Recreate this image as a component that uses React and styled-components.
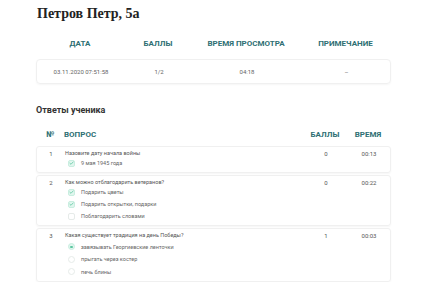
import React from "react";
import styled, { createGlobalStyle } from "styled-components";

const Global = createGlobalStyle`
  body {
    margin: 0;
    background: #fff;
    font-family: Roboto, "Noto Sans", sans-serif;
  }
`;

const Page = styled.div`
  width: 355px;
  padding: 6px 0 0 36px;
`;

const Title = styled.h1`
  margin: 0 0 0 1px;
  font-family: "Liberation Serif", serif;
  font-weight: bold;
  font-size: 14px;
  line-height: 16px;
  color: #222;
`;

const SummaryGrid = styled.div`
  display: grid;
  grid-template-columns: 88px 68px 108px 91px;
  align-items: center;
  text-align: center;
`;

const SummaryHead = styled(SummaryGrid)`
  height: 22px;
  margin-top: 10px;
  margin-bottom: 5px;
`;

const HeadCell = styled.div`
  font-size: 8px;
  font-weight: 700;
  color: #2e6f73;
  text-transform: uppercase;
  white-space: nowrap;
`;

const SummaryCard = styled(SummaryGrid)`
  height: 25px;
  box-sizing: border-box;
  border: 1px solid #f0f0f0;
  border-radius: 4px;
  box-shadow: 0 1px 2px rgba(0, 0, 0, 0.04);
`;

const ValueCell = styled.div`
  font-size: 6px;
  color: #666;
`;

const Subtitle = styled.h2`
  margin: 20px 0 0;
  font-size: 9px;
  line-height: 12px;
  font-weight: 700;
  color: #333;
`;

const RowGrid = styled.div`
  display: grid;
  grid-template-columns: 28px 241px 40px 46px;
`;

const TableHead = styled(RowGrid)`
  margin-top: 9px;
  height: 18px;
  align-items: center;
  margin-bottom: 3px;
`;

const TH = styled.div`
  font-size: 8px;
  font-weight: 700;
  color: #2e6f73;
  text-align: ${(p) => p.$align || "left"};
`;

const Rows = styled.div`
  display: flex;
  flex-direction: column;
  gap: 2px;
`;

const Row = styled(RowGrid)`
  box-sizing: border-box;
  padding: 3px 0 3px;
  border: 1px solid #f0f0f0;
  border-radius: 3px;
  box-shadow: 0 1px 2px rgba(0, 0, 0, 0.04);
`;

const Cell = styled.div`
  font-size: 6px;
  line-height: 7px;
  color: #555;
  text-align: ${(p) => p.$align || "left"};
`;

const Question = styled.div`
  font-size: 5.5px;
  line-height: 7px;
  color: #555;
`;

const Options = styled.div`
  padding-top: ${(p) => (p.$radio ? "1.5px" : "0")};
`;

const Option = styled.div`
  display: flex;
  align-items: center;
  gap: 6px;
  height: ${(p) => (p.$radio ? "12.5px" : "12px")};
  padding-left: 3px;
  font-size: 5.5px;
  color: #666;
`;

const Box = styled.span`
  width: 7px;
  height: 7px;
  box-sizing: border-box;
  border-radius: ${(p) => (p.$round ? "50%" : "2px")};
  border: 1px solid ${(p) => (p.$on ? "#c9eee0" : "#e6ebe9")};
  background: ${(p) => (p.$on ? "#e0f6ee" : "#fff")};
  display: flex;
  align-items: center;
  justify-content: center;
  flex: none;
`;

const Dot = styled.span`
  width: 2.5px;
  height: 2.5px;
  border-radius: 50%;
  background: #5cc6a0;
`;

function Mark({ type, on }) {
  if (type === "radio") {
    return <Box $round $on={on}>{on && <Dot />}</Box>;
  }
  return (
    <Box $on={on}>
      {on && (
        <svg width="5" height="4" viewBox="0 0 5 4">
          <path d="M0.6 2 L2 3.3 L4.4 0.7" fill="none" stroke="#62c9a3" strokeWidth="0.8" />
        </svg>
      )}
    </Box>
  );
}

const answers = [
  {
    n: 1,
    q: "Назовите дату начала войны",
    type: "check",
    opts: [["9 мая 1945 года", true]],
    score: "0",
    time: "00:13",
  },
  {
    n: 2,
    q: "Как можно отблагодарить ветеранов?",
    type: "check",
    opts: [
      ["Подарить цветы", true],
      ["Подарить открытки, подарки", true],
      ["Поблагодарить словами", false],
    ],
    score: "0",
    time: "00:22",
  },
  {
    n: 3,
    q: "Какая существует традиция на день Победы?",
    type: "radio",
    opts: [
      ["завязывать Георгиевские ленточки", true],
      ["прыгать через костер", false],
      ["печь блины", false],
    ],
    score: "1",
    time: "00:03",
  },
];

export default function App() {
  return (
    <Page>
      <Global />
      <Title>Петров Петр, 5а</Title>
      <SummaryHead>
        <HeadCell>Дата</HeadCell>
        <HeadCell>Баллы</HeadCell>
        <HeadCell>Время просмотра</HeadCell>
        <HeadCell>Примечание</HeadCell>
      </SummaryHead>
      <SummaryCard>
        <ValueCell>03.11.2020 07:51:58</ValueCell>
        <ValueCell>1/2</ValueCell>
        <ValueCell>04:18</ValueCell>
        <ValueCell>–</ValueCell>
      </SummaryCard>
      <Subtitle>Ответы ученика</Subtitle>
      <TableHead>
        <TH $align="center">№</TH>
        <TH>ВОПРОС</TH>
        <TH $align="center">БАЛЛЫ</TH>
        <TH $align="center">ВРЕМЯ</TH>
      </TableHead>
      <Rows>
        {answers.map((a) => (
          <Row key={a.n}>
            <Cell $align="center">{a.n}</Cell>
            <div>
              <Question>{a.q}</Question>
              <Options $radio={a.type === "radio"}>
                {a.opts.map(([text, on]) => (
                  <Option key={text} $radio={a.type === "radio"}>
                    <Mark type={a.type} on={on} />
                    {text}
                  </Option>
                ))}
              </Options>
            </div>
            <Cell $align="center">{a.score}</Cell>
            <Cell $align="center">{a.time}</Cell>
          </Row>
        ))}
      </Rows>
    </Page>
  );
}
